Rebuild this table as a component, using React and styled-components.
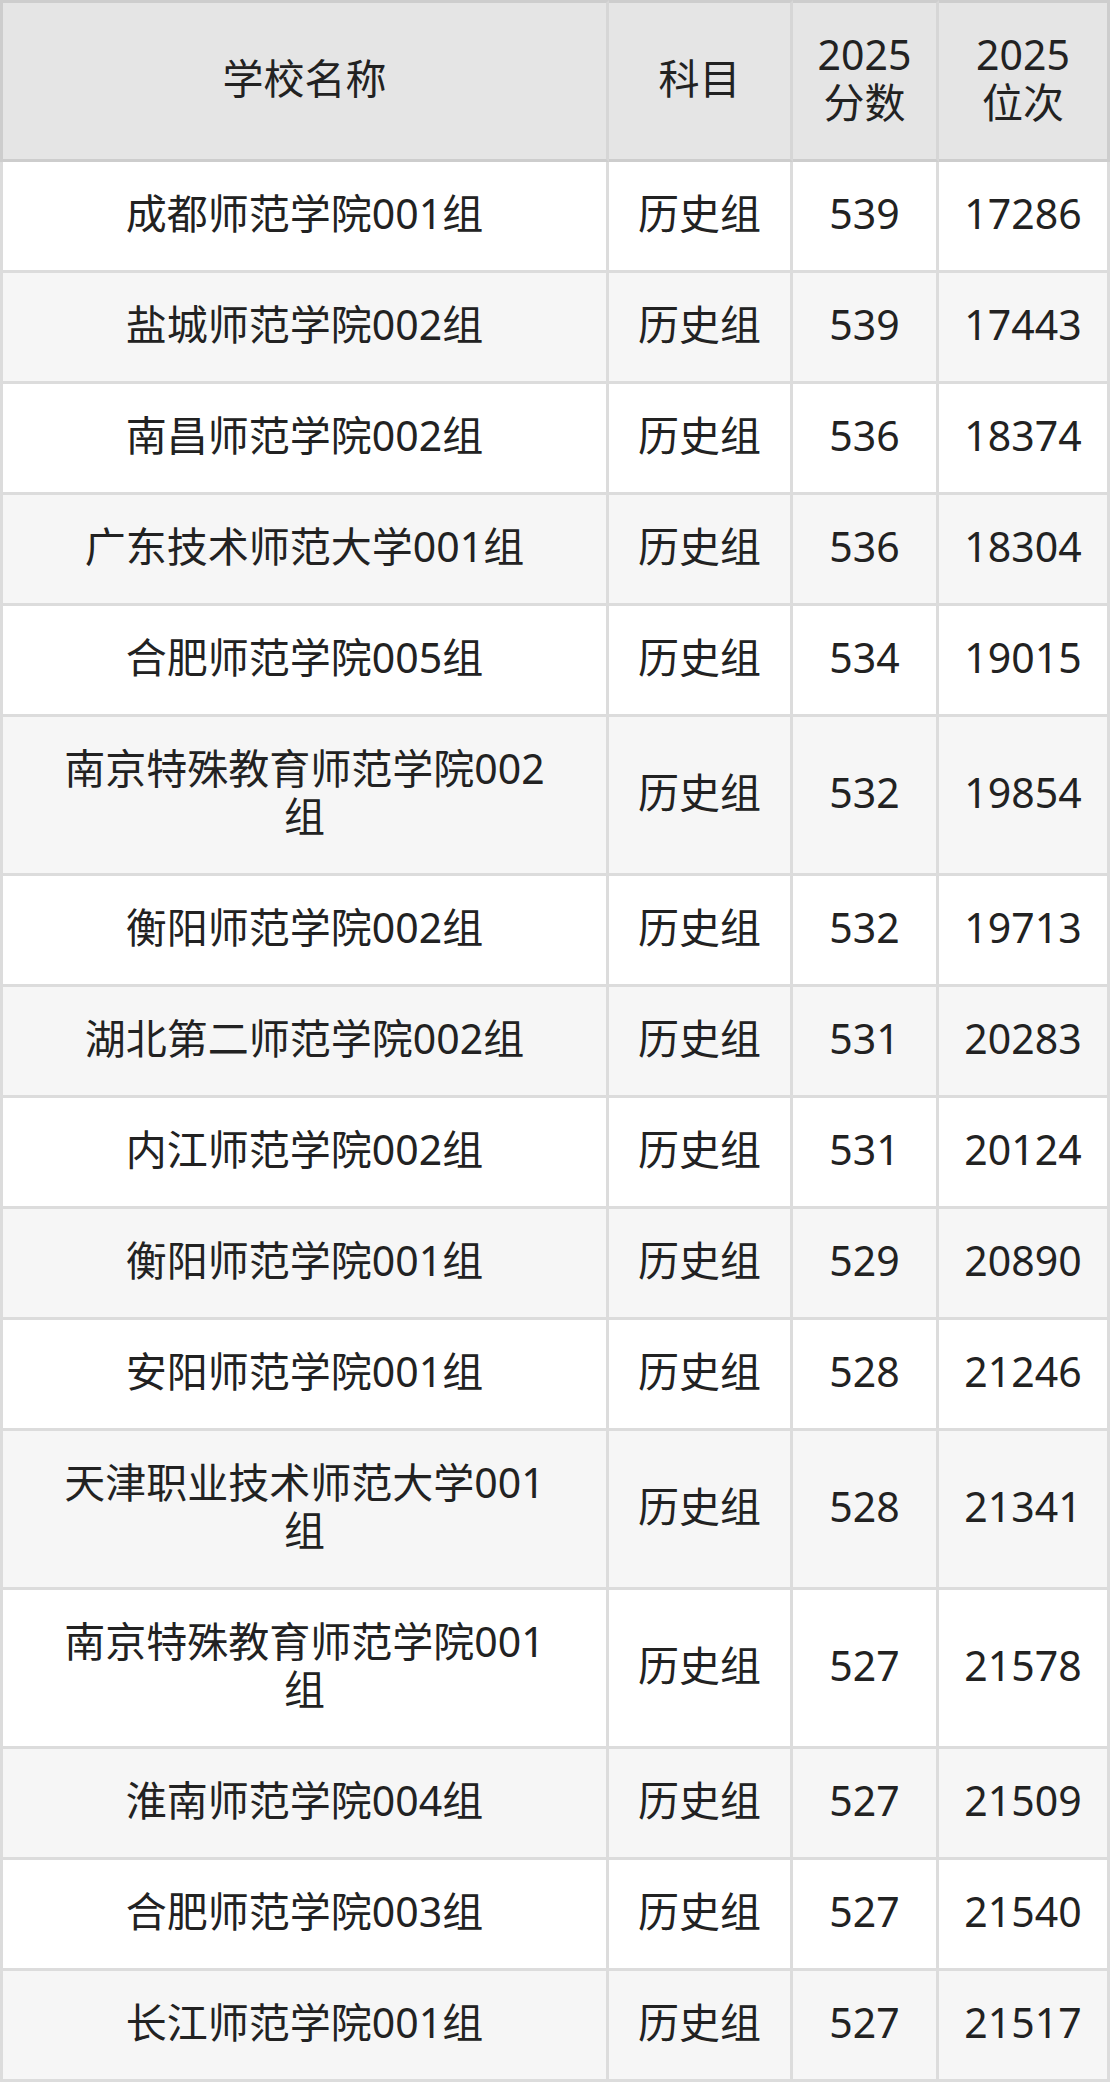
import React from 'react';
import styled, { createGlobalStyle } from 'styled-components';

const rows = [
  { name: '成都师范学院001组', subject: '历史组', score: 539, rank: 17286 },
  { name: '盐城师范学院002组', subject: '历史组', score: 539, rank: 17443 },
  { name: '南昌师范学院002组', subject: '历史组', score: 536, rank: 18374 },
  { name: '广东技术师范大学001组', subject: '历史组', score: 536, rank: 18304 },
  { name: '合肥师范学院005组', subject: '历史组', score: 534, rank: 19015 },
  { name: '南京特殊教育师范学院002组', subject: '历史组', score: 532, rank: 19854 },
  { name: '衡阳师范学院002组', subject: '历史组', score: 532, rank: 19713 },
  { name: '湖北第二师范学院002组', subject: '历史组', score: 531, rank: 20283 },
  { name: '内江师范学院002组', subject: '历史组', score: 531, rank: 20124 },
  { name: '衡阳师范学院001组', subject: '历史组', score: 529, rank: 20890 },
  { name: '安阳师范学院001组', subject: '历史组', score: 528, rank: 21246 },
  { name: '天津职业技术师范大学001组', subject: '历史组', score: 528, rank: 21341 },
  { name: '南京特殊教育师范学院001组', subject: '历史组', score: 527, rank: 21578 },
  { name: '淮南师范学院004组', subject: '历史组', score: 527, rank: 21509 },
  { name: '合肥师范学院003组', subject: '历史组', score: 527, rank: 21540 },
  { name: '长江师范学院001组', subject: '历史组', score: 527, rank: 21517 },
];

const GlobalStyle = createGlobalStyle`
  html, body {
    margin: 0;
    padding: 0;
    background: #fff;
  }
  body {
    font-family: "Noto Sans", "Noto Sans CJK SC", sans-serif;
  }
`;

const Table = styled.table`
  width: 1110px;
  table-layout: fixed;
  border-collapse: separate;
  border-spacing: 0;
  font-size: 41px;
  line-height: 48px;
  color: #222;
`;

const Col = styled.col`
  width: ${({ $w }) => $w}px;
`;

const HeadCell = styled.th`
  box-sizing: border-box;
  font-weight: normal;
  text-align: center;
  background: #e5e5e5;
  padding: 27px ${({ $wide }) => ($wide ? 50 : 20)}px 33px;
  border-top: 3px solid #cdcdcd;
  border-right: 3px solid #d6d6d6;
  border-bottom: 3px solid #cdcdcd;
  &:first-child {
    border-left: 3px solid #cdcdcd;
  }
  &:last-child {
    border-right-color: #cdcdcd;
  }
`;

const Row = styled.tr`
  background: ${({ $alt }) => ($alt ? '#f6f6f6' : '#fff')};
`;

const Cell = styled.td`
  box-sizing: border-box;
  text-align: center;
  padding: 27px ${({ $wide }) => ($wide ? 50 : 20)}px 33px;
  border-right: 3px solid #dcdcdc;
  border-bottom: 3px solid #dcdcdc;
  &:first-child {
    border-left: 3px solid #dcdcdc;
  }
`;

export default function App() {
  return (
    <>
      <GlobalStyle />
      <Table>
        <colgroup>
          <Col $w={609} />
          <Col $w={184} />
          <Col $w={146} />
          <Col $w={171} />
        </colgroup>
        <thead>
          <tr>
            <HeadCell $wide>学校名称</HeadCell>
            <HeadCell>科目</HeadCell>
            <HeadCell>2025分数</HeadCell>
            <HeadCell>2025位次</HeadCell>
          </tr>
        </thead>
        <tbody>
          {rows.map((r, i) => (
            <Row key={i} $alt={i % 2 === 1}>
              <Cell $wide>{r.name}</Cell>
              <Cell>{r.subject}</Cell>
              <Cell>{r.score}</Cell>
              <Cell>{r.rank}</Cell>
            </Row>
          ))}
        </tbody>
      </Table>
    </>
  );
}
